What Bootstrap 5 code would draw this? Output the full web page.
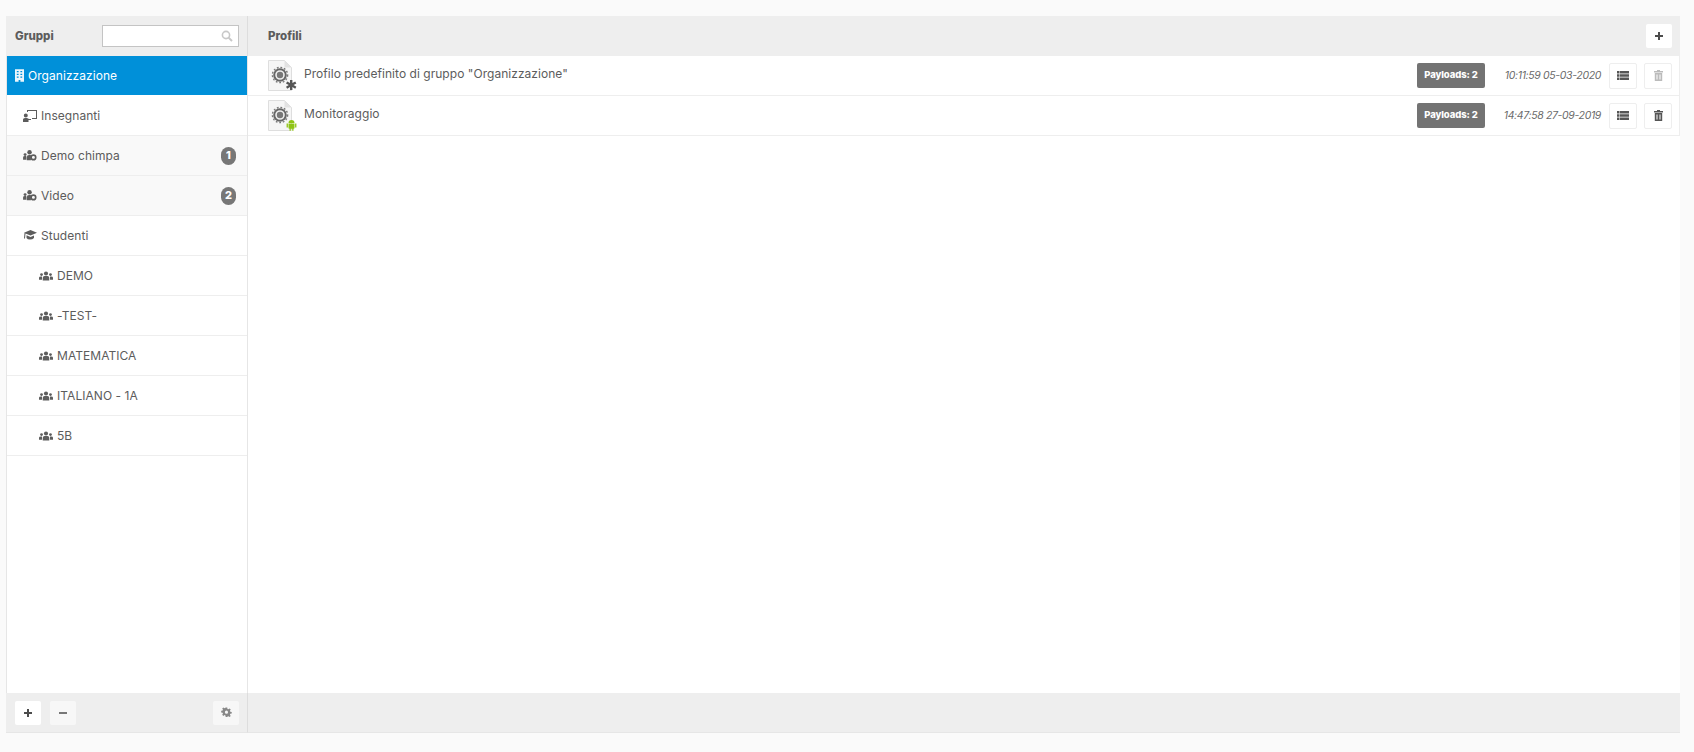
<!DOCTYPE html>
<html lang="it">
<head>
<meta charset="utf-8">
<title>Profili</title>
<link href="https://cdn.jsdelivr.net/npm/bootstrap@5.3.0/dist/css/bootstrap.min.css" rel="stylesheet">
<style>
html,body{height:100%;overflow:hidden}
body{background:#fafafa;font-family:Inter,"Liberation Sans",sans-serif;font-size:12px;color:#5c5c5c}
.shell{height:752px;padding:16px 14px 19px 6px}
.frame{height:100%;background:#fff}
.side{width:242px;border-left:1px solid #e6e6e6;border-right:1px solid #e6e6e6}
.head-bar{height:40px;background:#eee;margin-left:-1px;margin-right:-1px;padding:0 8px 0 9px;border-right:1px solid #ddd}
.head-title{font-weight:800;font-size:11.5px;color:#5c5c5c;margin-top:1px}
.search-box{width:137px;height:22px;background:#fff;border:1px solid #c4c4c4;padding-right:5px}
.grp{height:40px;border-bottom:1px solid #eee;padding:0 11px 0 16px;gap:4px;font-size:12px;letter-spacing:.05px}
.grp.child{padding-left:32px}
.grp.shade{background:#f9f9f9}
.grp.sel{background:#0090d9;color:#fff;padding-left:8px;border-bottom:1px solid #fff;gap:4px}
.num{margin-left:auto;background:#777;color:#fff;font-weight:800;font-size:11px;min-width:15px;height:18px;padding:0 4px;border-radius:9px}
.foot-bar{height:40px;background:#eee;margin-left:-1px;margin-right:-1px;padding:0 8px 0 9px;border-bottom:1px solid #e6e6e6;border-right:1px solid #ddd;gap:9px}
.tool{width:26px;height:24px;background:#fff;padding:0;border:0;border-radius:2px}
.tool.soft{background:#f7f7f7}
.main{min-width:0}
.main .head-bar,.main .foot-bar{margin:0;border-right:0}
.main .head-bar{padding:0 8px 0 20px}
.prof{height:40px;border-bottom:1px solid #eee;border-right:1px solid #eee;padding:0 7px 0 20px}
.prof-name{font-size:12px;margin-left:6px;margin-top:-3px;letter-spacing:.04px}
.pay{width:68px;height:25px;background:#737373;color:#fff;font-weight:800;font-size:9.5px;border-radius:2px;letter-spacing:-.1px}
.stamp{width:116px;text-align:right;font-style:italic;font-size:10.5px;color:#6a6a6a;margin-right:8px;letter-spacing:-.35px}
.act{width:28px;height:26px;background:#fff;border:1px solid #eee;border-radius:2px;padding:0}
.act.second{margin-left:7px}
</style>
</head>
<body>
<svg width="0" height="0" class="d-block" aria-hidden="true">
  <defs>
    <symbol id="ic-file" viewBox="0 0 30 32">
      <path d="M.5.500h16l7 7v23H.5z" fill="#f6f6f6" stroke="#dedede"/>
      <path d="M16.500.500v7h7z" fill="#e2e2e2"/>
      <circle cx="12" cy="15" r="5.800" fill="#eee" stroke="#666" stroke-width="2"/>
      <circle cx="12" cy="15" r="7.600" fill="none" stroke="#777" stroke-width="1.400" stroke-dasharray="1.800 1.800"/>
      <circle cx="12" cy="15" r="3.200" fill="#777"/>
    </symbol>
    <symbol id="ic-group" viewBox="0 0 15 10">
      <g fill="#5c5c5c"><circle cx="7.500" cy="2.300" r="2.200"/><circle cx="2.700" cy="3.500" r="1.500"/><circle cx="12.300" cy="3.500" r="1.500"/><path d="M0 9V7q0-1.500 2-1.500h1.200V9zM11.800 5.500H13q2 0 2 1.500v2h-3.200zM4 9.700V7q0-2 2-2h3q2 0 2 2v2.700z"/></g>
    </symbol>
    <symbol id="ic-mixed" viewBox="0 0 15 13">
      <g fill="#5c5c5c"><circle cx="7" cy="2.500" r="2.400"/><circle cx="2.200" cy="5" r="1.600"/><path d="M0 10.500V8q0-1.500 2-1.500h1.500v4zM4 11V8q0-2.500 2.500-2.500h2v5.500z"/></g>
      <circle cx="11.200" cy="8" r="2.500" fill="none" stroke="#5c5c5c" stroke-width="1.800"/>
    </symbol>
    <symbol id="ic-plus" viewBox="0 0 10 10"><path fill="#4c4c4c" d="M4 1h2v3h3v2H6v3H4V6H1V4h3z"/></symbol>
    <symbol id="ic-list" viewBox="0 0 12 9"><path fill="#555" d="M0 0h2.500v2.500H0zM3 0h9v2.500H3zM0 3.250h2.500v2.500H0zM3 3.250h9v2.500H3zM0 6.500h2.500V9H0zM3 6.500h9V9H3z"/></symbol>
    <symbol id="ic-trash" viewBox="0 0 9 11"><path fill-rule="evenodd" d="M3 0h3v1h3v1.500H0V1h3zM.8 3h7.400v8H.8zM2.500 4.500v5h1v-5zM5.500 4.500v5h1v-5z"/></symbol>
  </defs>
</svg>
<div class="shell">
<div class="frame d-flex">
  <div class="side d-flex flex-column flex-shrink-0">
    <div class="head-bar d-flex align-items-center justify-content-between">
      <span class="head-title">Gruppi</span>
      <div class="search-box d-flex align-items-center justify-content-end">
        <svg width="12" height="12" viewBox="0 0 12 12" fill="none" stroke="#c8c8c8" stroke-width="1.600"><circle cx="5" cy="5" r="3.600"/><path d="M7.600 7.600 11 11" stroke-width="2"/></svg>
      </div>
    </div>
    <div class="grp sel d-flex align-items-center">
      <svg width="9" height="13" viewBox="0 0 10 14"><path fill="#fff" fill-rule="evenodd" d="M0 0h10v14H6v-2H4v2H0zM2 2v1.500h2V2zM6 2v1.500h2V2zM2 5v1.500h2V5zM6 5v1.500h2V5zM2 8v1.500h2V8zM6 8v1.500h2V8z" opacity=".92"/></svg>
      <span>Organizzazione</span>
    </div>
    <div class="grp d-flex align-items-center">
      <svg width="14" height="12" viewBox="0 0 14 12"><path fill="#5c5c5c" d="M4 0h10v9H9V8h4V1H5v1H4zM2.800 3.500a2 2 0 1 1 0 4 2 2 0 0 1 0-4zM0 12V9.500Q0 8 2 8h2l2 1h2v1H5.500v2z"/></svg>
      <span>Insegnanti</span>
    </div>
    <div class="grp shade d-flex align-items-center">
      <svg width="14" height="12"><use href="#ic-mixed"/></svg>
      <span>Demo chimpa</span>
      <span class="num d-flex align-items-center justify-content-center">1</span>
    </div>
    <div class="grp shade d-flex align-items-center">
      <svg width="14" height="12"><use href="#ic-mixed"/></svg>
      <span>Video</span>
      <span class="num d-flex align-items-center justify-content-center">2</span>
    </div>
    <div class="grp d-flex align-items-center">
      <svg width="14" height="11" viewBox="0 0 14 11"><path fill="#5c5c5c" d="M7.500 0 14 2.800 7.500 5.600 2.500 3.500 2 8.500H1l.5-5.400L1 2.800zM3.500 5.200l4 1.700 3.500-1.500V8q-1.500 1.500-4 1.500T3.500 8z"/></svg>
      <span>Studenti</span>
    </div>
    <div class="grp child d-flex align-items-center"><svg width="14" height="10"><use href="#ic-group"/></svg><span>DEMO</span></div>
    <div class="grp child d-flex align-items-center"><svg width="14" height="10"><use href="#ic-group"/></svg><span>-TEST-</span></div>
    <div class="grp child d-flex align-items-center"><svg width="14" height="10"><use href="#ic-group"/></svg><span>MATEMATICA</span></div>
    <div class="grp child d-flex align-items-center"><svg width="14" height="10"><use href="#ic-group"/></svg><span>ITALIANO - 1A</span></div>
    <div class="grp child d-flex align-items-center"><svg width="14" height="10"><use href="#ic-group"/></svg><span>5B</span></div>
    <div class="flex-grow-1"></div>
    <div class="foot-bar d-flex align-items-center">
      <button class="btn tool d-flex align-items-center justify-content-center" type="button"><svg width="10" height="10"><use href="#ic-plus"/></svg></button>
      <button class="btn tool soft d-flex align-items-center justify-content-center" type="button"><svg width="10" height="10" viewBox="0 0 10 10"><path fill="#777" d="M1 4h8v2H1z"/></svg></button>
      <button class="btn tool soft d-flex align-items-center justify-content-center ms-auto" type="button"><svg width="11" height="11" viewBox="0 0 12 12"><path fill="#888" fill-rule="evenodd" d="M5 0h2l.3 1.800 1.200.5L10 1.300l1.400 1.400-1 1.500.5 1.200 1.800.3v2l-1.800.3-.5 1.200 1 1.500-1.400 1.400-1.500-1-1.200.5L7 12H5l-.3-1.800-1.200-.5-1.500 1L.6 9.300l1-1.500-.5-1.200L-.7 6.300v-2l1.800-.3.500-1.200-1-1.500L2 0l1.500 1 1.200-.5zM6 4a2 2 0 1 0 0 4 2 2 0 0 0 0-4z" transform="translate(.8 .5) scale(.86)"/></svg></button>
    </div>
  </div>
  <div class="main flex-grow-1 d-flex flex-column">
    <div class="head-bar d-flex align-items-center justify-content-between">
      <span class="head-title">Profili</span>
      <button class="btn tool d-flex align-items-center justify-content-center" type="button"><svg width="10" height="10"><use href="#ic-plus"/></svg></button>
    </div>
    <div class="prof d-flex align-items-center">
      <svg width="30" height="32" viewBox="0 0 30 32" class="flex-shrink-0"><use href="#ic-file"/><path fill="#555" d="M22 20h2.400v3.100l2.800-1.600 1.200 2-2.800 1.600 2.800 1.600-1.200 2-2.800-1.600V30H22v-2.900l-2.800 1.600-1.200-2 2.800-1.600L18 23.500l1.200-2 2.800 1.600z"/></svg>
      <span class="prof-name">Profilo predefinito di gruppo "Organizzazione"</span>
      <span class="pay d-flex align-items-center justify-content-center ms-auto">Payloads: 2</span>
      <span class="stamp">10:11:59 05-03-2020</span>
      <button class="btn act d-flex align-items-center justify-content-center" type="button"><svg width="12" height="9"><use href="#ic-list"/></svg></button>
      <button class="btn act second d-flex align-items-center justify-content-center" type="button"><svg width="9" height="11" fill="#bbb"><use href="#ic-trash"/></svg></button>
    </div>
    <div class="prof d-flex align-items-center">
      <svg width="30" height="32" viewBox="0 0 30 32" class="flex-shrink-0"><use href="#ic-file"/><path fill="#8fc414" d="M20.500 23a3 3 0 0 1 6 0zM20.500 23.600h6v4.400q0 .8-.8.8h-4.400q-.8 0-.8-.8zM18.600 23.600h1.300v3.800h-1.300zM27.100 23.600h1.300v3.800h-1.300zM21.500 28.800h1.300v2h-1.300zM24.200 28.800h1.300v2h-1.300z"/></svg>
      <span class="prof-name">Monitoraggio</span>
      <span class="pay d-flex align-items-center justify-content-center ms-auto">Payloads: 2</span>
      <span class="stamp">14:47:58 27-09-2019</span>
      <button class="btn act d-flex align-items-center justify-content-center" type="button"><svg width="12" height="9"><use href="#ic-list"/></svg></button>
      <button class="btn act second d-flex align-items-center justify-content-center" type="button"><svg width="9" height="11" fill="#555"><use href="#ic-trash"/></svg></button>
    </div>
    <div class="flex-grow-1"></div>
    <div class="foot-bar"></div>
  </div>
</div>
</div>
<script src="https://cdn.jsdelivr.net/npm/bootstrap@5.3.0/dist/js/bootstrap.bundle.min.js"></script>
</body>
</html>
